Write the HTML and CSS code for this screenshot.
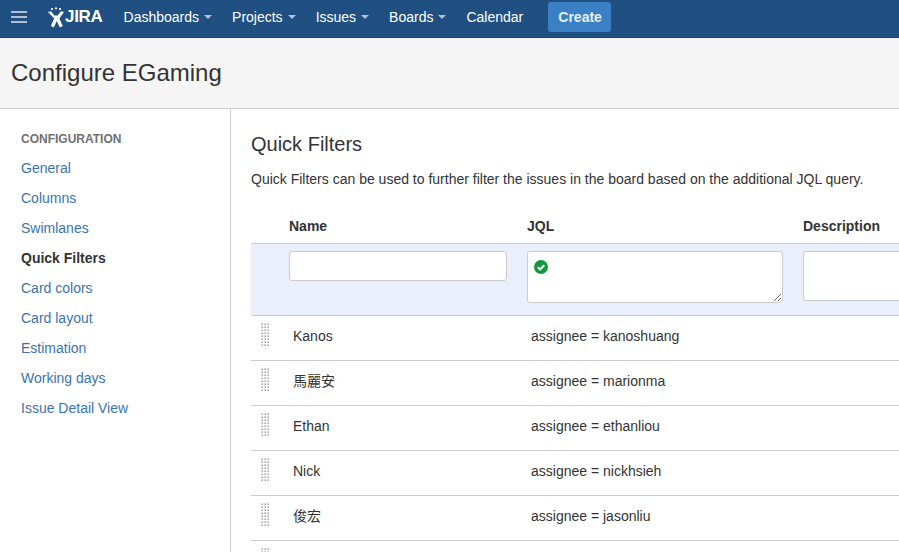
FILE: index.html
```html
<!DOCTYPE html>
<html lang="en">

<head>
     <meta charset="UTF-8">
     <meta name="viewport" content="width=device-width, initial-scale=1.0">
     <title>Configure EGaming</title>
     <link rel="stylesheet" href="styles.css">
</head>

<body>
     <!-- Top navigation -->
     <nav class="topbar">
          <svg class="menu-icon" width="16" height="12" viewBox="0 0 16 12">
               <path d="M0 1h16M0 6h16M0 11h16" stroke="#fff" stroke-opacity="0.85" stroke-width="1.6" fill="none" />
          </svg>
          <a class="logo" href="#">
               <svg class="logo-mark" width="18" height="21" viewBox="0 0 18 21">
                    <circle cx="5" cy="2" r="1.1" fill="#fff" />
                    <circle cx="9" cy="1.3" r="1.1" fill="#fff" />
                    <circle cx="13" cy="2" r="1.1" fill="#fff" />
                    <path d="M1 5l3-.8 3.4 4.3h3.2L14 4.200l3 .8-4.600 6.500 3.400 7.500-3 1.400-3-6.400-3 6.400-3-1.400 3.400-7.500z" fill="#fff" />
               </svg>
               <span class="logo-text">JIRA</span>
          </a>
          <ul class="nav-list">
               <li><a href="#">Dashboards<i class="caret"></i></a></li>
               <li><a href="#">Projects<i class="caret"></i></a></li>
               <li><a href="#">Issues<i class="caret"></i></a></li>
               <li><a href="#">Boards<i class="caret"></i></a></li>
               <li><a href="#">Calendar</a></li>
          </ul>
          <a class="create-btn" href="#">Create</a>
     </nav>

     <header class="page-header">
          <h1>Configure EGaming</h1>
     </header>

     <div class="content">
          <aside class="sidebar">
               <h3>Configuration</h3>
               <ul>
                    <li><a href="#">General</a></li>
                    <li><a href="#">Columns</a></li>
                    <li><a href="#">Swimlanes</a></li>
                    <li class="active"><a href="#">Quick Filters</a></li>
                    <li><a href="#">Card colors</a></li>
                    <li><a href="#">Card layout</a></li>
                    <li><a href="#">Estimation</a></li>
                    <li><a href="#">Working days</a></li>
                    <li><a href="#">Issue Detail View</a></li>
               </ul>
          </aside>

          <main class="main">
               <h2>Quick Filters</h2>
               <p class="intro">Quick Filters can be used to further filter the issues in the board based on the additional JQL query.</p>

               <div class="filters">
                    <div class="row head-row">
                         <div></div>
                         <div>Name</div>
                         <div>JQL</div>
                         <div>Description</div>
                    </div>
                    <div class="row form-row">
                         <div></div>
                         <div><input class="field name-field" type="text"></div>
                         <div class="jql-cell">
                              <textarea class="field jql-field"></textarea>
                              <svg class="valid-icon" width="14" height="14" viewBox="0 0 14 14">
                                   <circle cx="7" cy="7" r="7" fill="#14983f" />
                                   <path d="M3.800 7.200l2.300 2.200 4.200-4.200" stroke="#fff" stroke-width="2" fill="none" />
                              </svg>
                         </div>
                         <div><input class="field desc-field" type="text"></div>
                    </div>
                    <div class="row item-row">
                         <div><span class="grip"></span></div>
                         <div>Kanos</div>
                         <div>assignee = kanoshuang</div>
                         <div></div>
                    </div>
                    <div class="row item-row">
                         <div><span class="grip"></span></div>
                         <div>馬麗安</div>
                         <div>assignee = marionma</div>
                         <div></div>
                    </div>
                    <div class="row item-row">
                         <div><span class="grip"></span></div>
                         <div>Ethan</div>
                         <div>assignee = ethanliou</div>
                         <div></div>
                    </div>
                    <div class="row item-row">
                         <div><span class="grip"></span></div>
                         <div>Nick</div>
                         <div>assignee = nickhsieh</div>
                         <div></div>
                    </div>
                    <div class="row item-row">
                         <div><span class="grip"></span></div>
                         <div>俊宏</div>
                         <div>assignee = jasonliu</div>
                         <div></div>
                    </div>
                    <div class="row item-row">
                         <div><span class="grip"></span></div>
                         <div></div>
                         <div></div>
                         <div></div>
                    </div>
               </div>
          </main>
     </div>
</body>

</html>
```

FILE: styles.css
```css
/* Base styles */
html,
body {
     height: 100%;
}

body {
     margin: 0;
     overflow: hidden;
     background: #fff;
     color: #333;
     font-family: "Liberation Sans", Arial, "Noto Sans CJK TC", sans-serif;
     font-size: 14px;
     line-height: 20px;
     display: flex;
     flex-direction: column;
}

a {
     color: #3b73af;
     text-decoration: none;
}

ul {
     list-style: none;
     margin: 0;
     padding: 0;
}

/* Top navigation */
.topbar {
     flex: none;
     height: 38px;
     box-sizing: border-box;
     background: #205081;
     border-bottom: 1px solid #2e3d54;
     display: flex;
     align-items: center;
     padding: 0 0 3px 11px;
}

.menu-icon {
     margin-right: 20px;
}

.logo {
     display: flex;
     align-items: center;
     color: #fff;
     margin-right: 21px;
}

.logo-text {
     font-size: 17px;
     font-weight: 700;
     letter-spacing: -0.3px;
}

.nav-list {
     display: flex;
}

.nav-list li {
     margin-right: 20px;
}

.nav-list a {
     color: #fff;
}

.caret {
     display: inline-block;
     margin-left: 5px;
     vertical-align: 3px;
     border-top: 4px solid rgba(255, 255, 255, 0.65);
     border-left: 4px solid transparent;
     border-right: 4px solid transparent;
}

.create-btn {
     margin-left: 5px;
     height: 30px;
     line-height: 30px;
     padding: 0 9px 0 10px;
     border-radius: 3px;
     background: #3b7fc4;
     color: #e8f0f8;
     font-weight: 700;
}

/* Page header */
.page-header {
     flex: none;
     height: 71px;
     box-sizing: border-box;
     background: #f5f5f5;
     border-bottom: 1px solid #ccc;
     padding: 20px 11px 0;
}

.page-header h1 {
     margin: 0;
     font-size: 24px;
     font-weight: 400;
     line-height: 30px;
}

/* Sidebar + main */
.content {
     flex: 1;
     display: flex;
     min-height: 0;
}

.sidebar {
     flex: none;
     width: 230px;
     border-right: 1px solid #ccc;
     padding-top: 20px;
}

.sidebar h3 {
     margin: 0 0 4px 21px;
     color: #707070;
     font-size: 12px;
     font-weight: 700;
     line-height: 20px;
     text-transform: uppercase;
}

.sidebar li {
     height: 30px;
     line-height: 30px;
     padding-left: 21px;
}

.sidebar .active a {
     color: #333;
     font-weight: 700;
}

.main {
     flex: 1;
     min-width: 0;
     overflow: hidden;
     padding: 21px 0 0 20px;
}

.main h2 {
     margin: 0;
     font-size: 20px;
     font-weight: 400;
     line-height: 28px;
}

.intro {
     margin: 11px 0 0;
}

/* Filters table */
.filters {
     margin-top: 21px;
     width: 800px;
}

.row {
     display: grid;
     grid-template-columns: 38px 238px 276px 248px;
}

.head-row {
     height: 34px;
     box-sizing: border-box;
     font-weight: 700;
     padding-top: 6px;
     border-bottom: 1px solid #ccc;
}

.form-row {
     height: 72px;
     box-sizing: border-box;
     background: #e9f0fb;
     border-bottom: 1px solid #ccc;
     padding-top: 7px;
}

.field {
     display: block;
     box-sizing: border-box;
     margin: 0;
     background: #fff;
     border: 1px solid #ccc;
     border-radius: 3px;
     font: inherit;
}

.name-field {
     width: 218px;
     height: 30px;
}

.jql-cell {
     position: relative;
}

.jql-field {
     width: 256px;
     height: 52px;
}

.valid-icon {
     position: absolute;
     left: 7px;
     top: 9px;
}

.desc-field {
     width: 240px;
     height: 50px;
}

.item-row {
     height: 45px;
     box-sizing: border-box;
     border-bottom: 1px solid #ccc;
     line-height: 40px;
}

.item-row > div:nth-child(2),
.item-row > div:nth-child(3) {
     padding-left: 4px;
}

/* 3px tile: white bands leave a 2px dot, darker in its lower right corner */
.grip {
     display: block;
     width: 8px;
     height: 23px;
     margin: 7px 0 0 10px;
     background-image:
          linear-gradient(90deg, transparent 2px, #fff 2px),
          linear-gradient(transparent 2px, #fff 2px),
          conic-gradient(from 90deg at 1px 1px, #a6a6a6 25%, #d4d4d4 0);
     background-size: 3px 3px;
}
```
